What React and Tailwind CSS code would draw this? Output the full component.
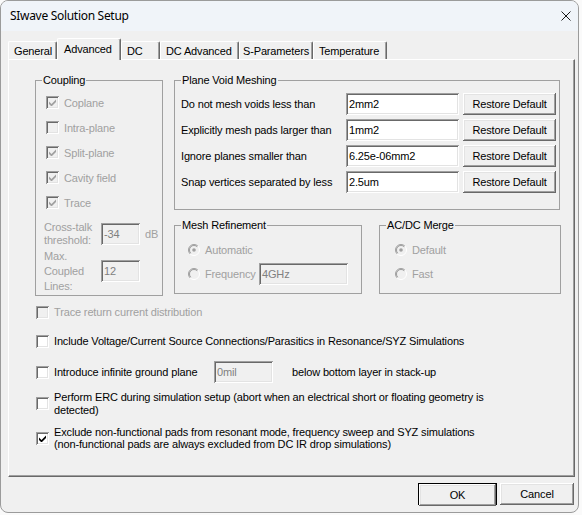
const sunken =
  "shadow-[inset_1px_1px_0_#a0a0a0,inset_-1px_-1px_0_#fff,inset_2px_2px_0_#696969,inset_-2px_-2px_0_#e3e3e3]";
const raised =
  "shadow-[inset_-1px_-1px_0_#696969,inset_1px_1px_0_#fff,inset_-2px_-2px_0_#a0a0a0,inset_2px_2px_0_#e3e3e3]";

function Check({ checked, disabled }) {
  return (
    <span
      className={`flex h-[13px] w-[13px] shrink-0 items-center justify-center ${
        disabled ? "bg-[#f0f0f0]" : "bg-white"
      } ${sunken}`}
    >
      {checked && (
        <svg width="7" height="7" viewBox="0 0 7 7">
          <path d="M0 2.5L2.5 5L7 0.5V3L2.5 7.5L0 5Z" fill={disabled ? "#a0a0a0" : "#000"} />
        </svg>
      )}
    </span>
  );
}

function Radio({ checked }) {
  return (
    <svg width="12" height="12" viewBox="0 0 12 12" className="shrink-0">
      <circle cx="6" cy="6" r="5.5" fill="#f0f0f0" />
      <path d="M2.1 9.9A5.5 5.5 0 0 1 9.9 2.1" stroke="#a0a0a0" fill="none" />
      <path d="M9.9 2.1A5.5 5.5 0 0 1 2.1 9.9" stroke="#fff" fill="none" />
      <path d="M2.8 9.2A4.5 4.5 0 0 1 9.2 2.8" stroke="#696969" fill="none" strokeOpacity="0.6" />
      {checked && <circle cx="6" cy="6" r="1.8" fill="#a0a0a0" />}
    </svg>
  );
}

function Field({ value, disabled, className = "" }) {
  return (
    <div
      className={`flex h-[22px] shrink-0 items-center pl-[3px] ${
        disabled ? "bg-[#f0f0f0] text-[#808080]" : "bg-white"
      } ${sunken} ${className}`}
    >
      {value}
    </div>
  );
}

function Button({ children, className = "" }) {
  return (
    <div className={`flex h-[22px] shrink-0 items-center justify-center bg-[#f0f0f0] ${raised} ${className}`}>
      {children}
    </div>
  );
}

function Group({ title, className = "", children }) {
  return (
    <fieldset className={`shrink-0 border border-[#a0a0a0] ${className}`}>
      <legend className="ml-[6px] px-px leading-[12px]">{title}</legend>
      {children}
    </fieldset>
  );
}

const tabs = [
  ["General", "w-[49px] pl-[5px]"],
  ["Advanced", "w-[64px] pl-[6px]"],
  ["DC", "w-[39px] pl-[5px]"],
  ["DC Advanced", "w-[79px] pl-[5px]"],
  ["S-Parameters", "w-[74px] pl-[3px]"],
  ["Temperature", "w-[74px] pl-[5px]"],
];

export default function App() {
  const gray = "text-[#a0a0a0]";
  return (
    <div className="h-[515px] w-[582px] bg-[#fafafa] font-['Liberation_Sans',Arial,sans-serif] text-[11px] leading-[12px] tracking-[-0.15px] text-black">
      <div className="flex h-[513px] w-[579px] flex-col overflow-hidden rounded-[8px] border border-[#9b9b9b] bg-[#f0f0f0]">
        <div className="flex h-[30px] shrink-0 items-center justify-between bg-[#f0f4f9] pl-[9px] pr-[7px] font-['Noto_Sans',sans-serif] text-[12px] tracking-[-0.3px]">
          <span>SIwave Solution Setup</span>
          <svg width="10" height="10" viewBox="0 0 10 10">
            <path d="M0.5 0.5L9.5 9.5M9.5 0.5L0.5 9.5" stroke="#1a1a1a" strokeWidth="1" />
          </svg>
        </div>

        <div className="mt-[7px] flex h-[21px] items-end whitespace-nowrap pl-[7px]">
          {tabs.map(([name, w]) =>
            name === "Advanced" ? (
              <div
                key={name}
                className={`relative z-10 -mb-px flex h-[22px] ${w} shrink-0 items-start rounded-t-[2px] border-l border-t border-r border-l-white border-t-white border-r-[#696969] bg-[#f0f0f0] pt-[4px] shadow-[inset_-1px_0_0_#a0a0a0]`}
              >
                {name}
              </div>
            ) : (
              <div
                key={name}
                className={`flex h-[18px] ${w} shrink-0 items-center rounded-t-[2px] border-l border-t border-r border-l-white border-t-white border-r-[#696969] shadow-[inset_-1px_0_0_#a0a0a0]`}
              >
                {name}
              </div>
            )
          )}
        </div>

        <div className="ml-[7px] h-[418px] w-[567px] border-l border-t border-r border-b border-l-white border-t-white border-r-[#696969] border-b-[#696969] shadow-[inset_-1px_-1px_0_#a0a0a0]">
          <div className="flex pl-[26px] pt-[14px]">
            <Group title="Coupling" className="h-[222px] w-[128px]">
              <div className="flex flex-col pt-[4px]">
                {[
                  ["Coplane", true],
                  ["Intra-plane", false],
                  ["Split-plane", true],
                  ["Cavity field", true],
                  ["Trace", true],
                ].map(([label, on]) => (
                  <div key={label} className="flex h-[25px] items-center gap-[5px] pl-[10px]">
                    <Check checked={on} disabled />
                    <span className={gray}>{label}</span>
                  </div>
                ))}
                <div className="mt-[8px] flex h-[22px] items-center pl-[8px]">
                  <span className={`w-[57px] leading-[13px] ${gray}`}>
                    Cross-talk
                    <br />
                    threshold:
                  </span>
                  <Field value="-34" disabled className="w-[39px]" />
                  <span className={`ml-[5px] ${gray}`}>dB</span>
                </div>
                <div className="mt-[15px] flex h-[22px] items-center pl-[8px]">
                  <span className={`w-[57px] leading-[15px] ${gray}`}>
                    Max.
                    <br />
                    Coupled
                    <br />
                    Lines:
                  </span>
                  <Field value="12" disabled className="w-[39px]" />
                </div>
              </div>
            </Group>

            <div className="ml-[11px] flex flex-col">
              <Group title="Plane Void Meshing" className="h-[136px] w-[386px]">
                <div className="flex flex-col gap-[4px] pt-[7px]">
                  {[
                    ["Do not mesh voids less than", "2mm2"],
                    ["Explicitly mesh pads larger than", "1mm2"],
                    ["Ignore planes smaller than", "6.25e-06mm2"],
                    ["Snap vertices separated by less", "2.5um"],
                  ].map(([label, v]) => (
                    <div key={label} className="flex h-[22px] items-center">
                      <span className="w-[171px] pl-[6px]">{label}</span>
                      <Field value={v} className="w-[113px]" />
                      <Button className="ml-[4px] w-[93px]">Restore Default</Button>
                    </div>
                  ))}
                </div>
              </Group>

              <div className="mt-[9px] flex">
                <Group title="Mesh Refinement" className="h-[75px] w-[188px]">
                  <div className="flex flex-col pl-[13px] pt-[8px]">
                    <div className="flex h-[22px] items-center gap-[5px]">
                      <Radio checked />
                      <span className={gray}>Automatic</span>
                    </div>
                    <div className="mt-[2px] flex h-[22px] items-center gap-[5px]">
                      <Radio />
                      <span className={`w-[54px] ${gray}`}>Frequency</span>
                      <Field value="4GHz" disabled className="-ml-[5px] w-[89px]" />
                    </div>
                  </div>
                </Group>
                <Group title="AC/DC Merge" className="ml-[17px] h-[75px] w-[182px]">
                  <div className="flex flex-col pl-[15px] pt-[8px]">
                    <div className="flex h-[22px] items-center gap-[5px]">
                      <Radio checked />
                      <span className={gray}>Default</span>
                    </div>
                    <div className="mt-[2px] flex h-[22px] items-center gap-[5px]">
                      <Radio />
                      <span className={gray}>Fast</span>
                    </div>
                  </div>
                </Group>
              </div>
            </div>
          </div>

          <div className="flex flex-col pl-[27px]">
            <div className="flex h-[32px] items-center gap-[5px]">
              <Check disabled />
              <span className={gray}>Trace return current distribution</span>
            </div>
            <div className="flex h-[26px] items-center gap-[5px]">
              <Check />
              <span>Include Voltage/Current Source Connections/Parasitics in Resonance/SYZ Simulations</span>
            </div>
            <div className="flex h-[36px] items-center gap-[5px]">
              <Check />
              <span className="w-[155px]">Introduce infinite ground plane</span>
              <Field value="0mil" disabled className="w-[59px]" />
              <span className="ml-[14px]">below bottom layer in stack-up</span>
            </div>
            <div className="flex h-[27px] items-center gap-[5px]">
              <Check />
              <span className="leading-[13px]">
                Perform ERC during simulation setup (abort when an electrical short or floating geometry is
                <br />
                detected)
              </span>
            </div>
            <div className="flex h-[42px] items-center gap-[5px]">
              <Check checked />
              <span className="leading-[12px]">
                Exclude non-functional pads from resonant mode, frequency sweep and SYZ simulations
                <br />
                (non-functional pads are always excluded from DC IR drop simulations)
              </span>
            </div>
          </div>
        </div>

        <div className="mt-[6px] flex justify-end pr-[4px]">
          <div className="h-[22px] w-[79px] border border-black">
            <Button className="h-[20px] w-full">OK</Button>
          </div>
          <Button className="ml-[3px] w-[74px]">Cancel</Button>
        </div>
      </div>
    </div>
  );
}
